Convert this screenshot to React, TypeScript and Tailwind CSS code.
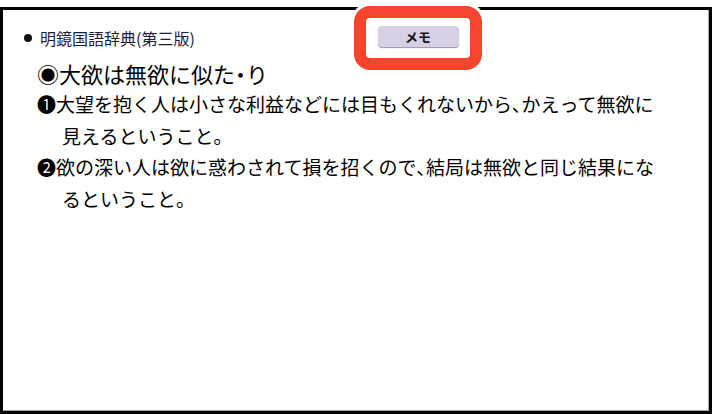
const jp = "font-['Noto_Sans_CJK_JP','Noto_Sans',sans-serif]"

// 約物を詰める（、・）
function P({ c }: { c: string }) {
  return <span className="[font-feature-settings:'palt']">{c}</span>
}

export default function App() {
  return (
    <div className={`relative w-[712px] h-[414px] bg-white pt-[7px] ${jp}`}>
      <div className="h-full border-[3px] border-black shadow-[inset_-1px_-1px_0_#a8a8a8] pt-[17px]">
        {/* 辞典名 */}
        <div className="flex items-center gap-[8px] pl-[21px] h-[22px]">
          <span className="w-[8px] h-[8px] rounded-full bg-[#111]" />
          <span className="text-[16px] leading-[22px] text-[#1c1c3a]">明鏡国語辞典(第三版)</span>
        </div>

        <div className="pl-[34px] mt-[9px] text-black">
          <div className="text-[22px] leading-[30px]">
            ◉大欲は無欲に似た<P c="・" />り
          </div>

          <div className="text-[19px] leading-[31.5px]">
            <div>
              ❶大望を抱く人は小さな利益などには目もくれないから<P c="、" />かえって無欲に
            </div>
            <div className="pl-[25px]">見えるということ。</div>
            <div>
              ❷欲の深い人は欲に惑わされて損を招くので<P c="、" />結局は無欲と同じ結果にな
            </div>
            <div className="pl-[25px]">るということ。</div>
          </div>
        </div>
      </div>

      {/* メモ タブ */}
      <div className="absolute left-[351px] top-[3px] rounded-[19px] bg-white p-[3px]">
        <div className="w-[128px] h-[64px] rounded-[16px] border-[12px] border-[#f4462f] bg-white flex items-start justify-center pt-[8px]">
          <button className="w-[81px] h-[21px] rounded-[4px] bg-[#d7d0e4] shadow-[0_1px_1px_#9a96a0] text-[13px] font-bold leading-[21px] text-[#111]">
            メモ
          </button>
        </div>
      </div>
    </div>
  )
}
